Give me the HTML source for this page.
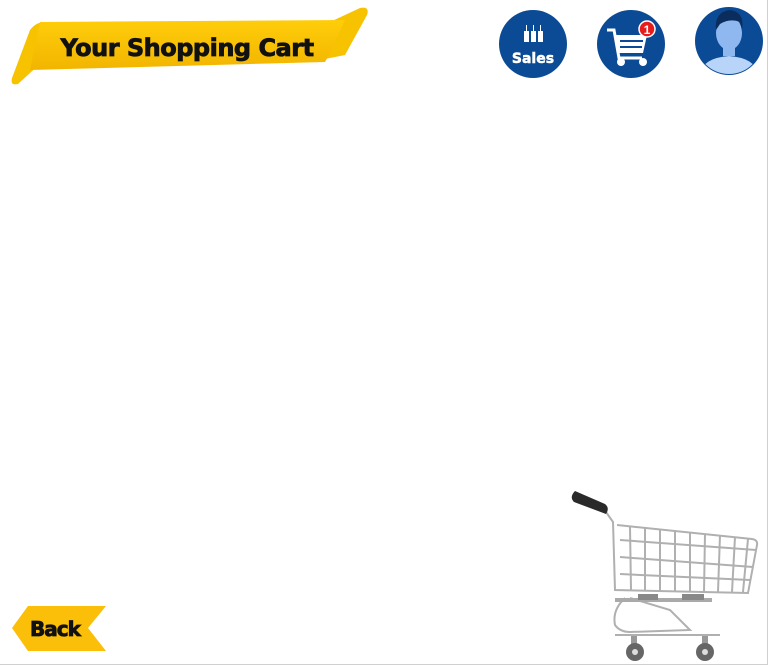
<!DOCTYPE html>
<html><head><style>
html,body{margin:0;padding:0;background:#fff;width:770px;height:666px;overflow:hidden;position:relative;font-family:"Liberation Sans",sans-serif}
.frame{position:absolute;left:0;top:0;width:767px;height:664px;border-right:1px solid #cfcfcf;border-bottom:1px solid #cfcfcf}
</style></head><body>
<div class="frame"></div>
<svg width="770" height="666" style="position:absolute;left:0;top:0">
<defs>
<linearGradient id="y" x1="0" y1="0" x2="0" y2="1"><stop offset="0" stop-color="#ffcd0a"/><stop offset="1" stop-color="#f2b500"/></linearGradient>
</defs>
<path d="M12,78 L30,30 Q36,22 45,22 L60,22 L42,62 L18,84 Q10,86 12,78Z" fill="#f7c200"/>
<path d="M330,22 L360,8 Q370,6 367,15 L345,55 L320,60 Z" fill="#f7c200"/>
<path d="M40,22 L345,20 Q332,50 325,62 L30,70 Z" fill="url(#y)"/>
<text x="187" y="56" text-anchor="middle" font-family="DejaVu Sans" font-weight="bold" font-size="24" fill="#111" stroke="#111" stroke-width="0.8" letter-spacing="-0.5">Your Shopping Cart</text>
<circle cx="533" cy="44" r="34" fill="#0b4a94"/>
<g fill="#fff"><rect x="524" y="31" width="5" height="11"/><rect x="531" y="31" width="5" height="11"/><rect x="538" y="31" width="5" height="11"/></g>
<g stroke="#fff" stroke-width="1"><line x1="526.5" y1="25" x2="526.5" y2="31"/><line x1="533.5" y1="25" x2="533.5" y2="31"/><line x1="540.5" y1="25" x2="540.5" y2="31"/></g>
<text x="533" y="63" text-anchor="middle" font-family="DejaVu Sans" font-weight="bold" font-size="14" fill="#fff" stroke="#fff" stroke-width="0.5">Sales</text>
<circle cx="631" cy="44" r="34" fill="#0b4a94"/>
<path d="M607,30 L614,30 L619,58 L642,58" stroke="#fff" stroke-width="3" fill="none"/>
<path d="M615,35 L647,35 L643,53 L619,53 Z" fill="#fff"/>
<g stroke="#0b4a94" stroke-width="2"><line x1="620" y1="41" x2="643" y2="41"/><line x1="620" y1="47" x2="642" y2="47"/></g>
<circle cx="621" cy="62" r="4" fill="#fff"/><circle cx="643" cy="62" r="4" fill="#fff"/>
<circle cx="647" cy="29" r="8" fill="#e61b1b" stroke="#fff" stroke-width="1.5"/>
<text x="647" y="34" text-anchor="middle" font-weight="bold" font-size="12" fill="#fff">1</text>
<circle cx="729" cy="41" r="34" fill="#0b4a94"/>
<clipPath id="c"><circle cx="729" cy="41" r="33"/></clipPath>
<g clip-path="url(#c)">
<path d="M700,75 Q702,58 729,56 Q756,58 758,75Z" fill="#b8d4f8"/>
<rect x="723" y="44" width="12" height="12" fill="#8fb8f0"/>
<ellipse cx="729" cy="33" rx="13" ry="17" fill="#8fb8f0"/>
<path d="M716,30 Q714,12 730,10 Q745,12 742,30 L740,22 Q730,18 720,24 Z" fill="#0a2d5e"/>
</g>
<path d="M12,628 L28,606 L106,606 L88,628 L106,651 L28,651 Z" fill="#fbbf0a"/>
<text x="55" y="636" text-anchor="middle" font-family="DejaVu Sans" font-weight="bold" font-size="20" fill="#111" stroke="#111" stroke-width="0.8" letter-spacing="-1">Back</text>
<g fill="none" stroke="#b0b0b0" stroke-width="2">
<path d="M606,512 L613,522 L615,590 L748,593 L757,545 Q758,540 752,539 L617,525"/>
<path d="M625,598 Q612,610 615,625 Q620,632 630,632 L690,630 L670,610 L630,598"/>
<line x1="615" y1="635" x2="720" y2="635"/>
<path d="M620,540 L756,550 M620,557 L753,567 M620,574 L750,580"/>
<path d="M630,527 L631,590 M645,528 L645,590 M660,529 L660,591 M675,531 L675,591 M690,532 L690,591 M705,534 L704,592 M720,535 L718,592 M735,537 L732,592 M748,539 L743,592"/>
</g>
<rect x="615" y="598" width="97" height="4" fill="#aaa"/>
<rect x="638" y="594" width="20" height="6" fill="#888"/><rect x="682" y="594" width="22" height="6" fill="#888"/>
<path d="M575,491 L605,504 Q610,508 606,514 L574,502 Q569,497 575,491Z" fill="#2a2a2a"/>
<rect x="631" y="636" width="6" height="8" fill="#999"/><rect x="702" y="636" width="6" height="8" fill="#999"/>
<circle cx="635" cy="652" r="9" fill="#666"/><circle cx="635" cy="652" r="3" fill="#ddd"/>
<circle cx="705" cy="652" r="9" fill="#666"/><circle cx="705" cy="652" r="3" fill="#ddd"/>
</svg>
</body></html>
